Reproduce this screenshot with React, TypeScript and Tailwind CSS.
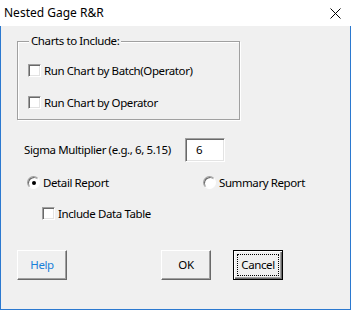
import React from "react";

const font = { fontFamily: '"Noto Sans", "Liberation Sans", sans-serif' };

function CheckBox({ label }: { label: string }) {
  return (
    <div className="flex h-[13px] items-center">
      <span className="h-[13px] w-[13px] shrink-0 border border-b-white border-l-[#a0a0a0] border-r-white border-t-[#a0a0a0] bg-white shadow-[inset_1px_1px_0_#696969,inset_-1px_-1px_0_#e3e3e3]" />
      <span className="ml-[3px] whitespace-nowrap text-[11.5px] leading-[13px] tracking-[-0.4px] text-black">{label}</span>
    </div>
  );
}

function Radio({ label, checked }: { label: string; checked?: boolean }) {
  return (
    <div className="flex h-[13px] items-center">
      <span className="relative h-[13px] w-[13px] shrink-0 rounded-full border border-b-white border-l-[#a0a0a0] border-r-white border-t-[#a0a0a0] bg-white shadow-[inset_1px_1px_0_#696969]">
        {checked && <span className="absolute left-[3.5px] top-[3.5px] h-[4px] w-[4px] rounded-full bg-black" />}
      </span>
      <span className="ml-[3px] whitespace-nowrap text-[11.5px] leading-[13px] tracking-[-0.4px] text-black">{label}</span>
    </div>
  );
}

function Button({ children, blue, focused }: { children: React.ReactNode; blue?: boolean; focused?: boolean }) {
  if (focused) {
    return (
      <div className="relative flex h-[30px] w-[50px] items-center justify-center border border-black bg-[#f0f0f0] shadow-[inset_1px_1px_0_#fff,inset_-1px_-1px_0_#696969,inset_-2px_-2px_0_#a0a0a0]">
        <span className="absolute inset-[3px] border border-dotted border-black" />
        <span className="text-[11.5px] tracking-[-0.4px] text-black">{children}</span>
      </div>
    );
  }
  return (
    <div className="flex h-[30px] w-[50px] items-center justify-center border border-b-[#696969] border-l-white border-r-[#696969] border-t-white bg-[#f0f0f0] shadow-[inset_-1px_-1px_0_#a0a0a0]">
      <span className={`text-[11.5px] tracking-[-0.4px] ${blue ? "text-[#1a7fd9]" : "text-black"}`}>{children}</span>
    </div>
  );
}

export default function App() {
  return (
    <div className="flex h-[310px] w-[351px] flex-col bg-white" style={font}>
      {/* title bar */}
      <div className="flex h-[26px] shrink-0 items-center justify-between bg-white pl-[4px] pr-[10px]">
        <span className="text-[12px] text-black">Nested Gage R&amp;R</span>
        <svg width="11" height="11" viewBox="0 0 11 11">
          <path d="M0.5 0.5 L10.5 10.5 M10.5 0.5 L0.5 10.5" stroke="#000" strokeWidth="1" fill="none" />
        </svg>
      </div>

      {/* body */}
      <div className="flex flex-1 flex-col border-b border-l border-r border-[#2b79d0] bg-[#f0f0f0]">
        {/* group */}
        <div className="relative ml-[16px] mt-[15px] h-[79px] w-[223px] border border-[#a0a0a0] shadow-[inset_1px_1px_0_#fff,1px_1px_0_#fff]">
          <span className="absolute left-[11px] top-[-9px] bg-[#f0f0f0] px-[2px] text-[11.5px] leading-[16px] tracking-[-0.4px] text-black">Charts to Include:</span>
          <div className="flex flex-col gap-[19px] pl-[10px] pt-[22px]">
            <CheckBox label="Run Chart by Batch(Operator)" />
            <CheckBox label="Run Chart by Operator" />
          </div>
        </div>

        {/* sigma */}
        <div className="mt-[18px] flex h-[24px] items-center pl-[23px]">
          <span className="w-[161px] whitespace-nowrap text-[11.5px] tracking-[-0.4px] text-black">Sigma Multiplier (e.g., 6, 5.15)</span>
          <div className="flex h-[24px] w-[40px] items-center border border-b-white border-l-[#a0a0a0] border-r-white border-t-[#a0a0a0] bg-white pl-[10px] shadow-[inset_1px_1px_0_#696969,inset_-1px_-1px_0_#e3e3e3]">
            <span className="text-[11.5px] text-black">6</span>
          </div>
        </div>

        {/* report type */}
        <div className="mt-[14px] flex pl-[26px]">
          <div className="w-[176px]">
            <Radio label="Detail Report" checked />
          </div>
          <Radio label="Summary Report" />
        </div>

        <div className="mt-[18px] pl-[41px]">
          <CheckBox label="Include Data Table" />
        </div>

        {/* buttons */}
        <div className="mt-[30px] flex pl-[16px]">
          <Button blue>Help</Button>
          <div className="ml-[94px]">
            <Button>OK</Button>
          </div>
          <div className="ml-[22px]">
            <Button focused>Cancel</Button>
          </div>
        </div>
      </div>
    </div>
  );
}
